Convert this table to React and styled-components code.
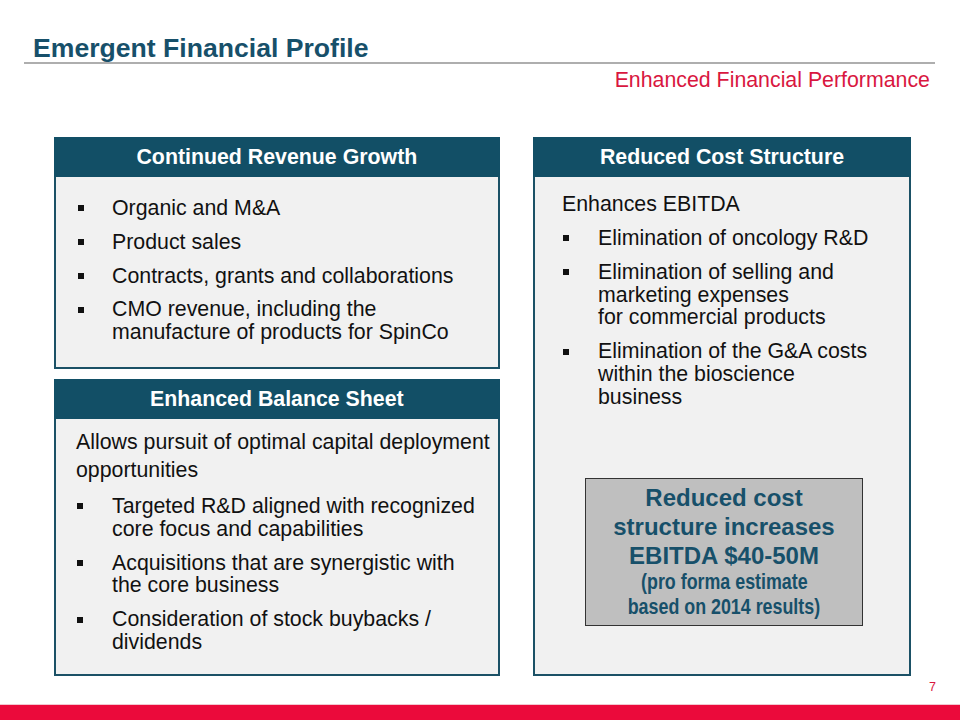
import styled, { createGlobalStyle } from "styled-components";

const GlobalStyle = createGlobalStyle`
  html, body {
    margin: 0;
    padding: 0;
    background: #ffffff;
  }
  body {
    font-family: "Liberation Sans", Arial, sans-serif;
  }
`;

const Slide = styled.div`
  width: 960px;
  height: 720px;
  display: flex;
  flex-direction: column;
  background: #ffffff;
  overflow: hidden;
`;

const TitleBar = styled.header`
  width: 911px;
  box-sizing: border-box;
  margin: 0 0 0 24px;
  padding: 35px 0 0 9px;
  border-bottom: 2px solid #aeaeae;
`;

const Title = styled.h1`
  margin: 0;
  font-size: 26.6px;
  line-height: 27px;
  font-weight: 700;
  color: #17506a;
`;

const Subtitle = styled.div`
  margin-top: 4px;
  padding-right: 30px;
  text-align: right;
  font-size: 21.33px;
  line-height: 24px;
  color: #d9173f;
`;

const Columns = styled.main`
  margin-top: 45px;
  padding-left: 54px;
  height: 539px;
  display: grid;
  grid-template-columns: 445px 378px;
  column-gap: 34px;
`;

const Stack = styled.div`
  display: grid;
  grid-template-rows: 232px 1fr;
  row-gap: 10px;
`;

const Card = styled.section`
  display: flex;
  flex-direction: column;
  border: 2px solid #1b5166;
  background: #f1f1f1;
  box-sizing: border-box;
`;

const CardHeader = styled.h2`
  margin: -2px -2px 0;
  height: 40px;
  display: flex;
  align-items: center;
  justify-content: center;
  background: #124f66;
  color: #ffffff;
  font-size: 21.33px;
  font-weight: 700;
`;

const CardBody = styled.div`
  flex: 1;
  display: flex;
  flex-direction: column;
  padding: ${(p) => p.$top}px 8px 0 ${(p) => p.$left}px;
  color: #111111;
  font-size: 21.33px;
`;

const Lead = styled.p`
  margin: 0;
  line-height: ${(p) => p.$lh}px;
  white-space: nowrap;
`;

const Bullets = styled.ul`
  list-style: none;
  margin: ${(p) => p.$top}px 0 0 ${(p) => p.$indent}px;
  padding: 0;
  display: flex;
  flex-direction: column;
  gap: 11px;
`;

const Item = styled.li`
  display: grid;
  grid-template-columns: ${(p) => p.$col}px 1fr;
  line-height: 22.8px;
  white-space: nowrap;
`;

const Mark = styled.span`
  height: 22.8px;
  display: flex;
  align-items: center;

  &::before {
    content: "";
    width: 6px;
    height: 6px;
    background: #111111;
  }
`;

const Callout = styled.div`
  margin: auto 0 48px 23px;
  width: 278px;
  box-sizing: border-box;
  padding: 4px 0 5px;
  border: 1.5px solid #333333;
  background: #bfbfbf;
  text-align: center;
  color: #17506a;
  font-weight: 700;
`;

const CalloutBig = styled.div`
  font-size: 24px;
  line-height: 29px;
`;

const CalloutSmall = styled.div`
  font-size: 21.5px;
  line-height: 25px;

  /* no narrow face installed, squeeze the regular bold */
  span {
    display: inline-block;
    transform: scaleX(0.83);
  }
`;

const Footer = styled.footer`
  margin-top: auto;
  display: flex;
  flex-direction: column;
`;

const PageNumber = styled.div`
  padding-right: 24px;
  text-align: right;
  font-size: 12.5px;
  line-height: 14px;
  color: #d9173f;
  margin-bottom: 10px;
`;

const Band = styled.div`
  height: 15px;
  background: #eb0a3b;
  border-top: 1px solid #f3c6cf;
`;

function BulletList({ items, top = 0, indent, col }) {
  return (
    <Bullets $top={top} $indent={indent}>
      {items.map((lines, i) => (
        <Item key={i} $col={col}>
          <Mark />
          <span>
            {lines.map((l, j) => (
              <span key={j}>
                {j > 0 && <br />}
                {l}
              </span>
            ))}
          </span>
        </Item>
      ))}
    </Bullets>
  );
}

export default function App() {
  return (
    <Slide>
      <GlobalStyle />
      <TitleBar>
        <Title>Emergent Financial Profile</Title>
      </TitleBar>
      <Subtitle>Enhanced Financial Performance</Subtitle>

      <Columns>
        <Stack>
          <Card>
            <CardHeader>Continued Revenue Growth</CardHeader>
            <CardBody $top={20} $left={0}>
              <BulletList
                indent={22}
                col={34}
                items={[
                  ["Organic and M&A"],
                  ["Product sales"],
                  ["Contracts, grants and collaborations"],
                  ["CMO revenue, including the", "manufacture of products for SpinCo"],
                ]}
              />
            </CardBody>
          </Card>

          <Card>
            <CardHeader>Enhanced Balance Sheet</CardHeader>
            <CardBody $top={10} $left={20}>
              <Lead $lh={27.5}>
                Allows pursuit of optimal capital deployment
                <br />
                opportunities
              </Lead>
              <BulletList
                top={11}
                indent={1}
                col={35}
                items={[
                  ["Targeted R&D aligned with recognized", "core focus and capabilities"],
                  ["Acquisitions that are synergistic with", "the core business"],
                  ["Consideration of stock buybacks /", "dividends"],
                ]}
              />
            </CardBody>
          </Card>
        </Stack>

        <Card>
          <CardHeader>Reduced Cost Structure</CardHeader>
          <CardBody $top={16} $left={27}>
            <Lead $lh={23}>Enhances EBITDA</Lead>
            <BulletList
              top={11}
              indent={1}
              col={35}
              items={[
                ["Elimination of oncology R&D"],
                ["Elimination of selling and", "marketing expenses", "for commercial products"],
                ["Elimination of the G&A costs", "within the bioscience", "business"],
              ]}
            />
            <Callout>
              <CalloutBig>Reduced cost</CalloutBig>
              <CalloutBig>structure increases</CalloutBig>
              <CalloutBig>EBITDA $40-50M</CalloutBig>
              <CalloutSmall>
                <span>(pro forma estimate</span>
              </CalloutSmall>
              <CalloutSmall>
                <span>based on 2014 results)</span>
              </CalloutSmall>
            </Callout>
          </CardBody>
        </Card>
      </Columns>

      <Footer>
        <PageNumber>7</PageNumber>
        <Band />
      </Footer>
    </Slide>
  );
}
